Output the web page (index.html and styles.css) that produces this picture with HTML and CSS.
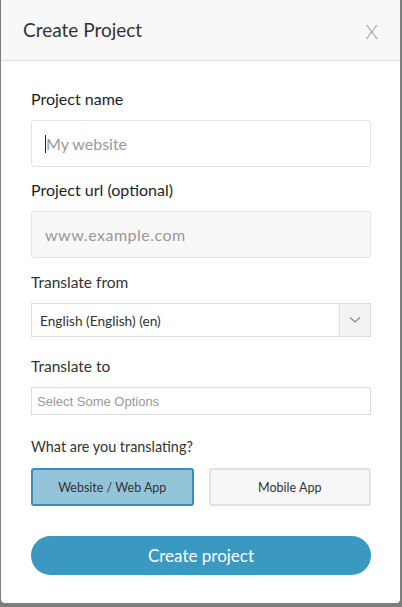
FILE: index.html
```html
<!DOCTYPE html>
<html>
<head>
<meta charset="utf-8">
<link rel="stylesheet" href="styles.css">
</head>
<body>
<div class="modal">
  <div class="modal-header">
    <h1 class="title">Create Project</h1>
    <span class="close">X</span>
  </div>
  <div class="modal-body">
    <label class="label label-bold">Project name</label>
    <div class="input input-first"><span class="caret"></span><span class="ph">My website</span></div>
    <label class="label label-bold">Project url (optional)</label>
    <div class="input input-gray"><span class="ph">www.example.com</span></div>
    <label class="label label-mid">Translate from</label>
    <div class="select">
      <span class="select-text">English (English) (en)</span>
      <span class="select-arrow">
        <svg width="12" height="8" viewBox="0 0 12 8"><path d="M1 1.5 L6 6 L11 1.5" fill="none" stroke="#888" stroke-width="1.2"/></svg>
      </span>
    </div>
    <label class="label label-mid">Translate to</label>
    <div class="multi"><span>Select Some Options</span></div>
    <label class="label label-small">What are you translating?</label>
    <div class="choices">
      <div class="choice choice-active">Website / Web App</div>
      <div class="choice">Mobile App</div>
    </div>
    <div class="submit">Create project</div>
  </div>
</div>
</body>
</html>
```
FILE: styles.css
```css
html, body {
  margin: 0;
  padding: 0;
}
body {
  background: #7d7d7d;
  font-family: Lato, "Open Sans", sans-serif;
  color: #333;
  width: 402px;
  height: 607px;
  overflow: hidden;
}
.modal {
  margin-left: 1px;
  width: 399px;
  height: 603px;
  background: #fff;
  border-radius: 0 0 4px 4px;
  overflow: hidden;
}
.modal-header {
  height: 61px;
  background: #f8f8f8;
  border-bottom: 1px solid #ddd;
  box-sizing: border-box;
  display: flex;
  align-items: center;
  justify-content: space-between;
  padding: 0 22px 0 22px;
}
.title {
  margin: 0;
  font-size: 19px;
  font-weight: 400;
  color: #333;
  padding-bottom: 1px;
}
.close {
  font-size: 20px;
  color: #9a9a9a;
  font-weight: 300;
  padding-top: 1px;
}
.modal-body {
  padding: 29px 29px 0 30px;
  display: flex;
  flex-direction: column;
}
.label {
  display: block;
  font-size: 16px;
  line-height: 18px;
  color: #333;
  margin-bottom: 12px;
}
.label-bold {
  font-weight: 400;
  color: #1e1e1e;
}
.label-mid {
  font-size: 15.5px;
}
.label-small {
  font-size: 14.4px;
}
.input {
  height: 47px;
  box-sizing: border-box;
  border: 1px solid #e3e3e3;
  border-radius: 3px;
  display: flex;
  align-items: center;
  padding-left: 13px;
  margin-bottom: 14px;
  font-size: 16px;
}
.input-gray {
  background: #f8f8f8;
  margin-bottom: 15px;
}
.ph {
  color: #999;
}
.input-gray .ph {
  letter-spacing: 0.5px;
}
.caret {
  width: 1px;
  height: 18px;
  background: #222;
}
.select {
  height: 34px;
  box-sizing: border-box;
  border: 1px solid #ddd;
  display: flex;
  align-items: stretch;
  margin-bottom: 20px;
}
.select-text {
  flex: 1;
  display: flex;
  align-items: center;
  padding-left: 8px;
  font-size: 13.7px;
  color: #333;
}
.select-arrow {
  width: 30px;
  background: #f3f3f3;
  border-left: 1px solid #ddd;
  display: flex;
  align-items: center;
  justify-content: center;
}
.multi {
  height: 28px;
  box-sizing: border-box;
  border: 1px solid #ddd;
  display: flex;
  align-items: center;
  padding-left: 5px;
  font-family: "Liberation Sans", Arial, sans-serif;
  font-size: 13px;
  color: #999;
  margin-bottom: 23px;
}
.choices {
  display: flex;
  gap: 15px;
}
.choice {
  flex: 1;
  height: 38px;
  box-sizing: border-box;
  border: 2px solid #e2e2e2;
  background: #f7f7f7;
  border-radius: 3px;
  display: flex;
  align-items: center;
  justify-content: center;
  font-size: 12.5px;
  color: #333;
}
.choice-active {
  background: #94c4da;
  border-color: #3a8fba;
}
.submit {
  margin-top: 30px;
  height: 39px;
  border-radius: 20px;
  background: #3b98c0;
  color: #fff;
  font-size: 17px;
  display: flex;
  align-items: center;
  justify-content: center;
}
```
